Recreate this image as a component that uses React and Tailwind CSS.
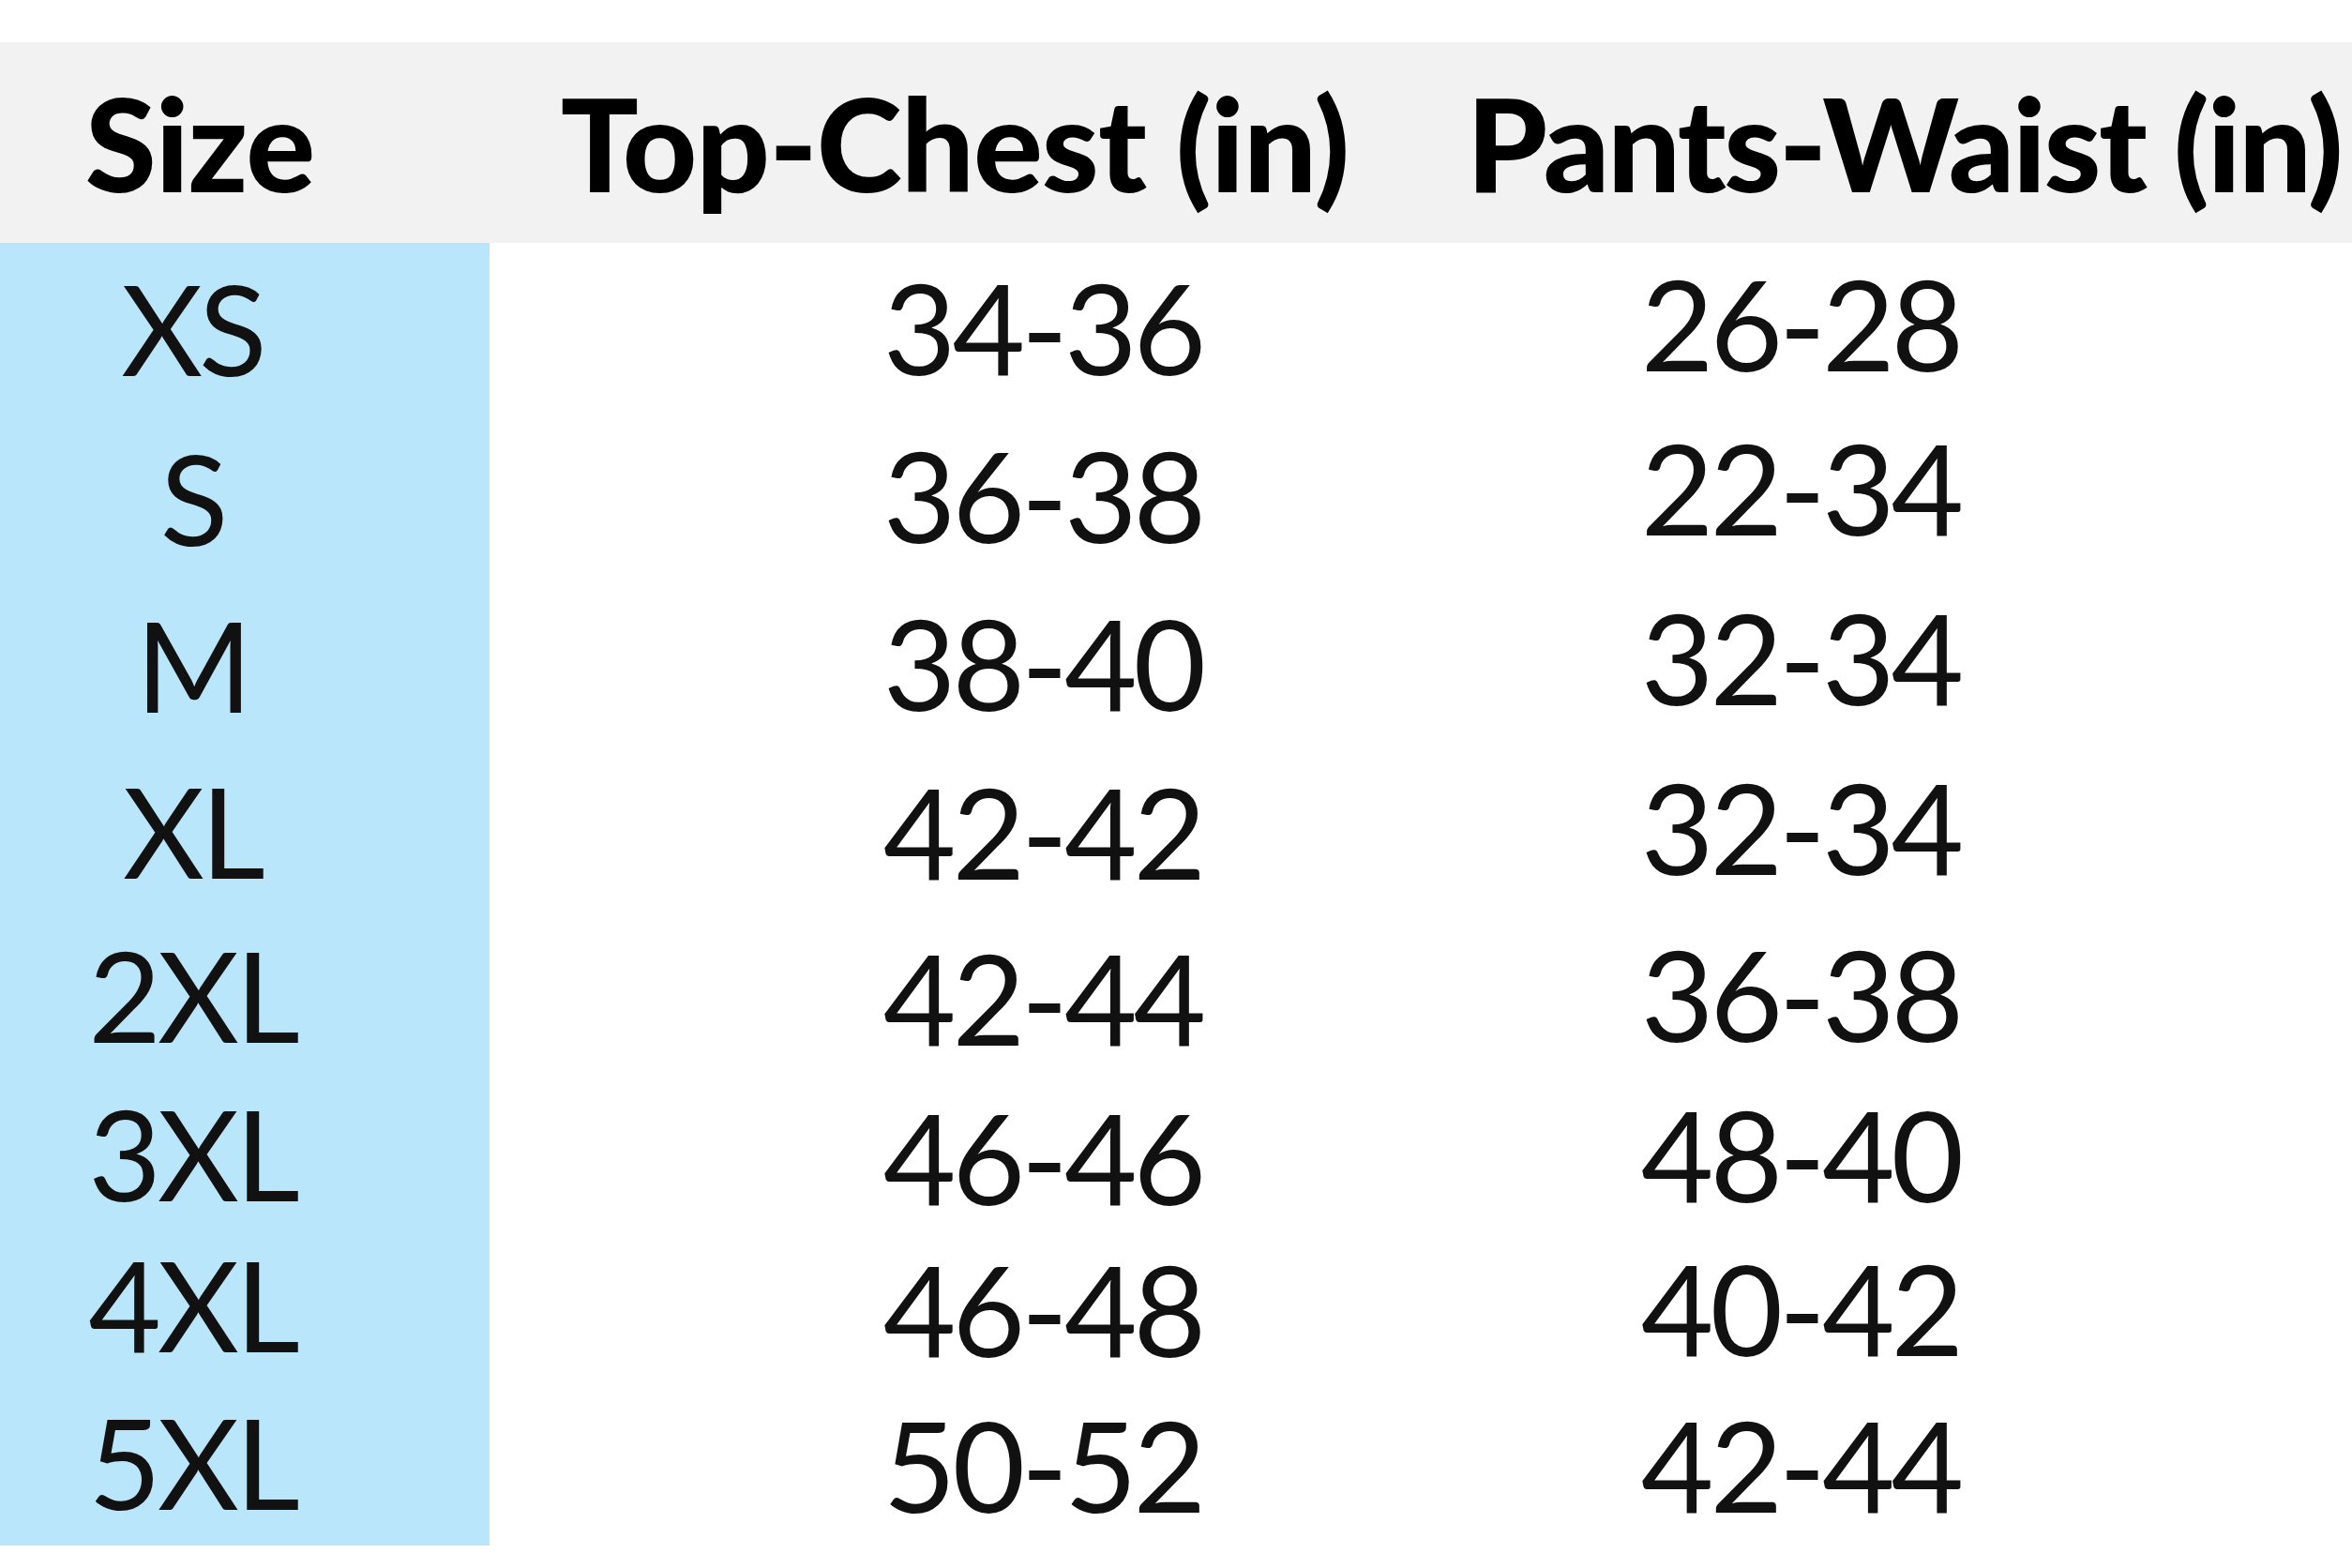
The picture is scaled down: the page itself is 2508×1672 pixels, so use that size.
import React from "react";

const sizes = [
  ["XS", "h-[182px]"],
  ["S", "h-[179px]"],
  ["M", "h-[178px]"],
  ["XL", "h-[176px]"],
  ["2XL", "h-[174px]"],
  ["3XL", "h-[163px]"],
  ["4XL", "h-[159px]"],
  ["5XL", "h-[178px]"],
];

const chest = [
  ["34-36", "h-[179px]"],
  ["36-38", "h-[179px]"],
  ["38-40", "h-[180px]"],
  ["42-42", "h-[179px]"],
  ["42-44", "h-[176px]"],
  ["46-46", "h-[164px]"],
  ["46-48", "h-[160px]"],
  ["50-52", "h-[172px]"],
];

const waist = [
  ["26-28", "h-[171px]"],
  ["22-34", "h-[180px]"],
  ["32-34", "h-[182px]"],
  ["32-34", "h-[179px]"],
  ["36-38", "h-[177px]"],
  ["48-40", "h-[166px]"],
  ["40-42", "h-[162px]"],
  ["42-44", "h-[172px]"],
];

const Column = ({ items, className }) => (
  <div className={`flex flex-col ${className}`}>
    {items.map(([label, h], i) => (
      <div key={i} className={`${h} flex items-center justify-center`}>
        {label}
      </div>
    ))}
  </div>
);

const App = () => {
  return (
    <div
      className="w-[2508px] h-[1672px] bg-white text-[#111] overflow-hidden"
      style={{ fontFamily: "Lato, 'Open Sans', sans-serif" }}
    >
      <div className="h-[45px]" />
      <div className="h-[214px] bg-[#f2f2f2] flex items-center text-black font-black text-[138px] leading-none tracking-[-1px] whitespace-nowrap">
        <div className="w-[426px] shrink-0 flex justify-center">Size</div>
        <div className="w-[1184px] shrink-0 flex justify-center">Top-Chest (in)</div>
        <div className="w-[840px] shrink-0 flex justify-center tracking-[-2.5px]">
          Pants-Waist (in)
        </div>
      </div>
      <div className="flex text-[134px] leading-none tracking-[-4px]">
        <Column items={sizes} className="w-[522px] bg-[#b9e6fa] pr-[112px]" />
        <Column items={chest} className="w-[1180px]" />
        <Column items={waist} className="w-[436px]" />
      </div>
    </div>
  );
};

export default App;
